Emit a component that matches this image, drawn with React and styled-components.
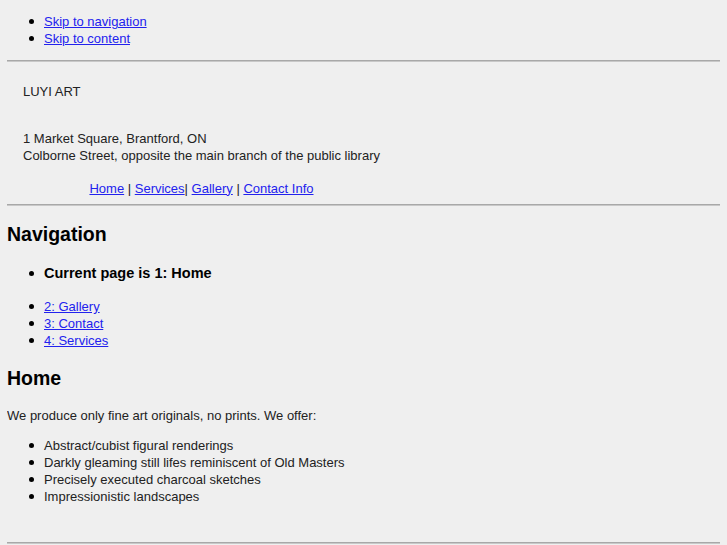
import styled, { createGlobalStyle } from 'styled-components';

const GlobalStyles = createGlobalStyle`
	body {
		margin: 0 7px;
		background: #efefef;
		color: #222;
		font-family: "Liberation Sans", Arial, sans-serif;
		font-size: 13px;
		line-height: 17px;
	}
	a {
		color: #2222ee;
	}
`;

const List = styled.ul`
	margin: ${props => props.$top ?? 13}px 0 ${props => props.$bottom ?? 13}px;
	padding-left: 37px;
	list-style: none;
`;

// disc drawn by hand: the default one is smaller than in the reference
const Item = styled.li`
	position: relative;

	&::before {
		content: '';
		position: absolute;
		left: -15px;
		top: ${props => props.$dot ?? 6}px;
		width: 5px;
		height: 5px;
		border-radius: 50%;
		background: #000;
	}
`;

const Rule = styled.hr`
	margin: 0;
	height: 0;
	border: none;
	border-top: 1px solid #a8a8a8;
	border-bottom: 1px solid #c8c8c8;
`;

const Header = styled.div`
	display: inline-block;
	padding: 8px 16px 7.5px;
`;

const Brand = styled.p`
	margin: 13px 0 29.5px;
`;

const Address = styled.p`
	margin: 0 0 16px;
`;

const SiteNav = styled.div`
	text-align: center;
`;

const Heading = styled.h2`
	margin: ${props => props.$top}px 0 0;
	color: #000;
	font-size: 19.5px;
	line-height: 22px;
	font-weight: bold;
`;

const Current = styled.h3`
	margin: 0;
	color: #000;
	font-size: 14.5px;
	line-height: 18px;
	font-weight: bold;
`;

const Text = styled.p`
	margin: 17.5px 0 0;
`;

function App() {
	const pages = ['2: Gallery', '3: Contact', '4: Services'];
	const offers = [
		'Abstract/cubist figural renderings',
		'Darkly gleaming still lifes reminiscent of Old Masters',
		'Precisely executed charcoal sketches',
		'Impressionistic landscapes',
	];

	return (
		<>
			<GlobalStyles />
			<List>
				<Item><a href="#nav">Skip to navigation</a></Item>
				<Item><a href="#content">Skip to content</a></Item>
			</List>
			<Rule />
			<Header>
				<Brand>LUYI ART</Brand>
				<Address>
					1 Market Square, Brantford, ON<br />
					Colborne Street, opposite the main branch of the public library
				</Address>
				<SiteNav>
					<a href="#home">Home</a> | <a href="#services">Services</a>| <a href="#gallery">Gallery</a> | <a href="#contact">Contact Info</a>
				</SiteNav>
			</Header>
			<Rule />
			<Heading id="nav" $top={17}>Navigation</Heading>
			<List $top={19} $bottom={16}>
				<Item $dot={7}><Current>Current page is 1: Home</Current></Item>
			</List>
			<List $top={0} $bottom={0}>
				{pages.map(p => (
					<Item key={p}><a href={'#' + p}>{p}</a></Item>
				))}
			</List>
			<Heading id="content" $top={18}>Home</Heading>
			<Text>We produce only fine art originals, no prints. We offer:</Text>
			<List $bottom={37}>
				{offers.map(o => <Item key={o}>{o}</Item>)}
			</List>
			<Rule />
		</>
	);
}

export default App;
